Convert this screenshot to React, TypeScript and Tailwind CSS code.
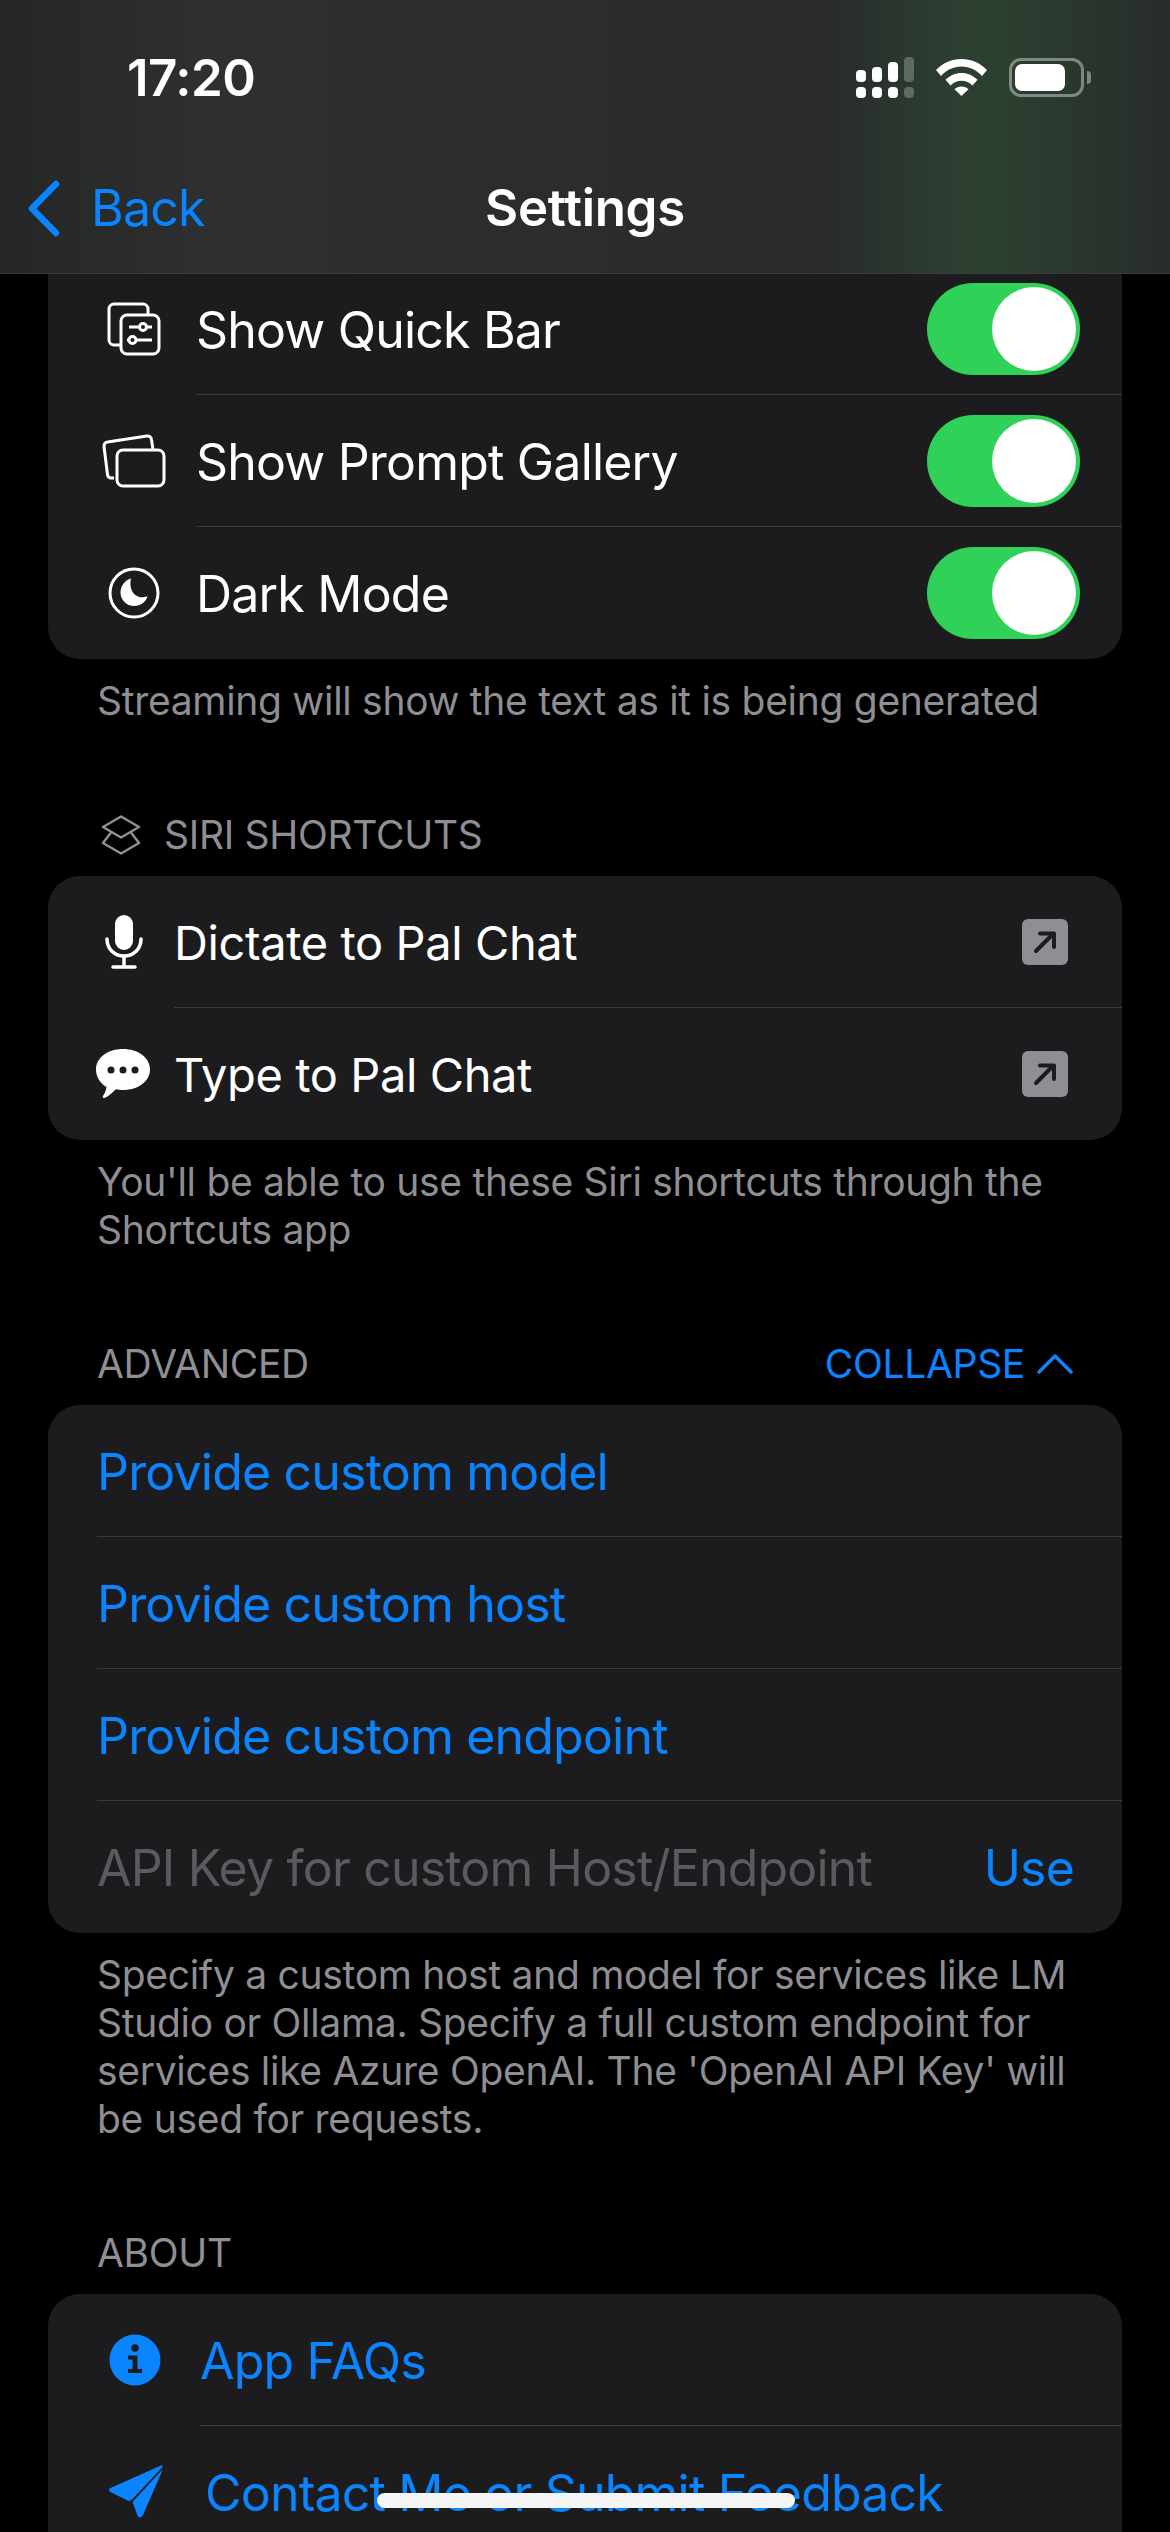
import type { ReactNode } from 'react';

const FONT = 'font-["Inter","Liberation_Sans",sans-serif]';

function StatusIcons() {
  return (
    <div className="flex items-center">
      <svg width="58" height="41" viewBox="0 0 58 41" fill="#fff">
        <rect x="0" y="13" width="10" height="12" rx="4" />
        <rect x="16" y="10" width="10" height="15" rx="4" />
        <rect x="32" y="5" width="10" height="20" rx="4" />
        <rect x="48" y="0" width="10" height="25" rx="4" fillOpacity="0.25" />
        <rect x="0" y="30" width="10" height="11" rx="4" />
        <rect x="16" y="30" width="10" height="11" rx="4" />
        <rect x="32" y="30" width="10" height="11" rx="4" />
        <rect x="48" y="30" width="10" height="11" rx="4" fillOpacity="0.25" />
      </svg>
      <svg className="ml-[22px]" width="51" height="37" viewBox="0 0 51 37" fill="#fff">
        <path d="M25.500 0C35 0 44 3.800 51 11l-5 6C40.500 11 33.500 7.500 25.500 7.500S10.500 11 5 17l-5-6C7 3.800 16 0 25.500 0z" />
        <path d="M25.500 14c6 0 11.500 2.400 16 6.800l-5 5.700c-3-3-6.800-4.700-11-4.700s-8 1.700-11 4.700l-5-5.700c4.500-4.400 10-6.800 16-6.800z" />
        <path d="M25.500 27.500c2.800 0 5 1 7 2.800L25.500 37l-7-6.700c2-1.800 4.200-2.800 7-2.800z" />
      </svg>
      <div className="ml-[22px] flex items-center">
        <div className="flex h-[39px] w-[75px] items-center rounded-[12px] border-[3px] border-white/40 p-[3px]">
          <div className="h-full w-[50px] rounded-[7px] bg-white" />
        </div>
        <div className="ml-[3px] h-[13px] w-[4px] rounded-r-full bg-white/40" />
      </div>
    </div>
  );
}

function NavBar() {
  return (
    <header className="relative z-10 h-[274px] border-b border-[#3a3b3c] bg-[linear-gradient(90deg,#252726_0%,#2e2f30_18%,#2b2c2d_50%,#292a2b_70%,#2c3f31_82%,#2b3f30_86%,#282c2a_100%)]">
      <div className="flex h-[158px] items-start justify-between pl-[127px] pr-[79px] pt-[48px]">
        <span className="text-[51px] leading-[60px] font-semibold tracking-[-0.5px] text-white">17:20</span>
        <div className="pl-[2px] pt-[9px]">
          <StatusIcons />
        </div>
      </div>
      <div className="relative flex h-[115px] items-center justify-center">
        <button className="absolute left-[28px] top-[20px] flex items-center text-[#0a84ff]">
          <svg width="32" height="57" viewBox="0 0 32 57" fill="none" stroke="currentColor" strokeWidth="6.500" strokeLinecap="round" strokeLinejoin="round">
            <path d="M28 4 4 28.500 28 53" />
          </svg>
          <span className="ml-[31px] text-[50px] leading-[60px] tracking-[-0.8px]">Back</span>
        </button>
        <h1 className="mb-[16px] text-[51px] leading-[60px] font-semibold tracking-[-0.3px] text-white">Settings</h1>
      </div>
    </header>
  );
}

function Toggle() {
  return (
    <div className="flex h-[92px] w-[153px] items-center justify-end rounded-full bg-[#30d158] pr-[4px]">
      <div className="h-[84px] w-[84px] rounded-full bg-white" />
    </div>
  );
}

function Row({ icon, iconWidth, children, right }: { icon?: ReactNode; iconWidth: number; children: ReactNode; right?: ReactNode; }) {
  return (
    <div className="flex h-[132px] items-stretch">
      <div className="flex shrink-0 items-center" style={{ width: iconWidth }}>
        {icon}
      </div>
      <div className="flex min-w-0 flex-1 items-center justify-between border-b border-[#3a3a3c]">
        {children}
        {right}
      </div>
    </div>
  );
}

function Card({ children, className = '' }: { children: ReactNode; className?: string }) {
  return <section className={`mx-[48px] overflow-hidden bg-[#1c1c1e] [&>div:last-child>div:last-child]:border-b-0 ${className}`}>{children}</section>;
}

function Footnote({ children }: { children: ReactNode }) {
  return <p className="mx-[97px] mr-[90px] pt-[18px] text-[39px] leading-[48px] tracking-[-0.3px] text-[#8e8e93]">{children}</p>;
}

function OpenBox() {
  return (
    <div className="mr-[54px] flex h-[46px] w-[46px] items-center justify-center rounded-[6px] bg-[#8e8e93]">
      <svg width="24" height="24" viewBox="0 0 24 24" fill="none" stroke="#1c1c1e" strokeWidth="4" strokeLinecap="round" strokeLinejoin="round">
        <path d="M3 21 20 4" />
        <path d="M7 3.500h14V17" />
      </svg>
    </div>
  );
}

const body = 'pt-[2px] text-[50px] leading-[60px] tracking-[-0.8px] text-white';
const siriBody = 'pt-[2px] text-[47px] leading-[60px] tracking-[-0.4px] text-white';
const link = 'pt-[2px] text-[50px] leading-[60px] tracking-[-0.8px] text-[#0a84ff]';
const sectionLabel = 'mt-[86px] flex h-[48px] items-center text-[39px] tracking-[-0.3px] text-[#8e8e93]';

export default function App() {
  return (
    <div className={`relative h-[2532px] w-[1170px] overflow-hidden bg-black ${FONT}`}>
      <NavBar />

      <Card className="-mt-[11px] rounded-b-[32px]">
        <Row
          iconWidth={148}
          icon={
            <svg className="ml-[59px]" width="54" height="54" viewBox="0 0 54 54" fill="none" stroke="#fff" strokeWidth="3">
              <path d="M13 43H7a5 5 0 0 1-5-5V7a5 5 0 0 1 5-5h29a5 5 0 0 1 5 5v5" />
              <rect x="14" y="13" width="38" height="39" rx="6" />
              <path d="M22 25h10M39 25h6M22 38h-2M29 38h16" />
              <circle cx="36" cy="25" r="3.500" />
              <circle cx="25.500" cy="38" r="3.500" />
            </svg>
          }
          right={<div className="mr-[42px]"><Toggle /></div>}
        >
          <span className={body}>Show Quick Bar</span>
        </Row>
        <Row
          iconWidth={148}
          icon={
            <svg className="ml-[54px]" width="64" height="54" viewBox="0 0 64 54" fill="none" stroke="#fff" strokeWidth="3">
              <path d="M12 44H9.500a4 4 0 0 1-4-3.500L2 12.500a4 4 0 0 1 3.500-4.500L45 2a4 4 0 0 1 4.500 3.500L51 16" />
              <rect x="15" y="16" width="47" height="36" rx="6" />
            </svg>
          }
          right={<div className="mr-[42px]"><Toggle /></div>}
        >
          <span className={body}>Show Prompt Gallery</span>
        </Row>
        <Row
          iconWidth={148}
          icon={
            <svg className="ml-[60px]" width="52" height="52" viewBox="0 0 52 52" fill="none">
              <circle cx="26" cy="26" r="24" stroke="#fff" strokeWidth="3" />
              <path fill="#fff" d="M23 11.500c-1.600 7 .2 13.200 4.400 16.500 3.300 2.600 8 3 12.100 1.300-1.700 6-7 9.700-13.300 9.700-7.700 0-13.700-6-13.700-13.500 0-6.500 4.300-12.300 10.500-14z" />
            </svg>
          }
          right={<div className="mr-[42px]"><Toggle /></div>}
        >
          <span className={body}>Dark Mode</span>
        </Row>
      </Card>
      <Footnote>Streaming will show the text as it is being generated</Footnote>

      <div className={`ml-[101px] ${sectionLabel}`}>
        <svg width="40" height="40" viewBox="0 0 40 40" fill="none" stroke="#8e8e93" strokeWidth="2.500" strokeLinejoin="round">
          <path d="M20 1.500 38 12 20 22.500 2 12z" />
          <path d="M10 17.500 2 28l18 10.500L38 28l-8-10.500" />
        </svg>
        <span className="ml-[23px]">SIRI SHORTCUTS</span>
      </div>
      <Card className="mt-[17px] rounded-[32px]">
        <Row
          iconWidth={126}
          icon={
            <svg className="ml-[57px]" width="38" height="54" viewBox="0 0 38 54" fill="none" stroke="#fff" strokeWidth="3.500" strokeLinecap="round">
              <rect x="10" y="0" width="18" height="35" rx="9" fill="#fff" stroke="none" />
              <path d="M2 24c0 10 7.500 17 17 17s17-7 17-17" />
              <path d="M19 41v10M8 52h22" />
            </svg>
          }
          right={<OpenBox />}
        >
          <span className={siriBody}>Dictate to Pal Chat</span>
        </Row>
        <Row
          iconWidth={126}
          icon={
            <svg className="ml-[48px]" width="54" height="50" viewBox="0 0 54 50" fill="#fff">
              <path d="M27 0c15 0 27 8.500 27 20.500S42 41 27 41c-2.500 0-5-.200-7-.700C15.500 44 11 49 8 49c-1.500 0-1.500-1-1-2 1-2 3-4.500 3.500-9C4 34 0 28 0 20.500 0 8.500 12 0 27 0z" />
              <circle cx="15" cy="21" r="3.500" fill="#1c1c1e" />
              <circle cx="27" cy="21" r="3.500" fill="#1c1c1e" />
              <circle cx="39" cy="21" r="3.500" fill="#1c1c1e" />
            </svg>
          }
          right={<OpenBox />}
        >
          <span className={siriBody}>Type to Pal Chat</span>
        </Row>
      </Card>
      <Footnote>You'll be able to use these Siri shortcuts through the Shortcuts app</Footnote>

      <div className={`mx-[97px] justify-between ${sectionLabel}`}>
        <span>ADVANCED</span>
        <span className="flex items-center text-[#0a84ff]">
          COLLAPSE
          <svg className="ml-[12px]" width="36" height="20" viewBox="0 0 36 20" fill="none" stroke="currentColor" strokeWidth="3.500" strokeLinecap="round" strokeLinejoin="round">
            <path d="M2 18 18 2l16 16" />
          </svg>
        </span>
      </div>
      <Card className="mt-[17px] rounded-[32px]">
        <Row iconWidth={49}><span className={link}>Provide custom model</span></Row>
        <Row iconWidth={49}><span className={link}>Provide custom host</span></Row>
        <Row iconWidth={49}><span className={link}>Provide custom endpoint</span></Row>
        <Row iconWidth={49} right={<span className={`mr-[48px] ${link}`}>Use</span>}>
          <span className="pt-[2px] text-[50px] leading-[60px] tracking-[-0.8px] text-[#5b5b5f]">API Key for custom Host/Endpoint</span>
        </Row>
      </Card>
      <Footnote>
        Specify a custom host and model for services like LM Studio or Ollama. Specify a full custom endpoint for services like Azure OpenAI. The 'OpenAI API Key' will be used for requests.
      </Footnote>

      <div className={`mx-[97px] ${sectionLabel}`}>ABOUT</div>
      <Card className="mt-[17px] rounded-t-[32px]">
        <Row
          iconWidth={152}
          icon={
            <svg className="ml-[61px]" width="52" height="52" viewBox="0 0 52 52">
              <circle cx="26" cy="26" r="25.500" fill="#0a84ff" />
              <circle cx="26" cy="14" r="3.800" fill="#1c1c1e" />
              <path fill="#1c1c1e" d="M19 21.500h9.500V35H33v4H19v-4h4.500v-9.500H19z" />
            </svg>
          }
        >
          <span className={link}>App FAQs</span>
        </Row>
        <Row
          iconWidth={152}
          icon={
            <svg className="ml-[61px]" width="54" height="54" viewBox="0 0 54 54" fill="#0a84ff">
              <path d="M52 0.500c1.200-.400 2 .500 1.500 1.500L24 33.500l-3.500 2.500-2 -.500L1.500 27c-2-1-2-3 0-4z" />
              <path d="M54 4 34 50c-1 3-4.500 3.500-5.500.500L23.500 37z" />
            </svg>
          }
        >
          <span className={`ml-[5px] ${link}`}>Contact Me or Submit Feedback</span>
        </Row>
      </Card>

      {/* home indicator sits on top of the scrolled content */}
      <div className="absolute left-[377px] top-[2493px] h-[15px] w-[418px] rounded-full bg-[#f5f5f5]" />
    </div>
  );
}
